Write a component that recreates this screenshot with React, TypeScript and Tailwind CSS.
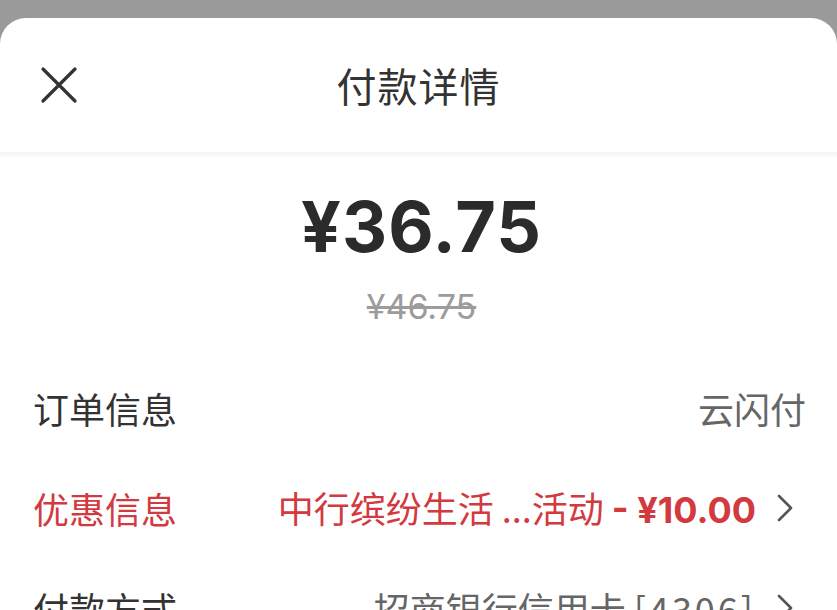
import React from "react";

const cjk = { fontFamily: '"Noto Sans CJK SC", "Noto Sans", sans-serif' };
const num = { fontFamily: 'Inter, "Noto Sans CJK SC", sans-serif' };

function Chevron() {
  return (
    <svg width="18" height="28" viewBox="0 0 18 28" className="shrink-0 mr-[12px]">
      <polyline points="3,2 15,14 3,26" fill="none" stroke="#555" strokeWidth="2.6" strokeLinecap="round" strokeLinejoin="round" />
    </svg>
  );
}

export default function App() {
  return (
    <div className="w-[837px] h-[610px] overflow-hidden bg-[#9a9a9a]" style={cjk}>
      <div className="mt-[18px] h-[592px] bg-white rounded-t-[26px] flex flex-col">
        <div className="h-[134px] shrink-0 grid grid-cols-[1fr_auto_1fr] items-center px-[40px]">
          <svg width="38" height="38" viewBox="0 0 38 38">
            <path d="M3 3 L35 35 M35 3 L3 35" stroke="#333" strokeWidth="3.2" strokeLinecap="round" />
          </svg>
          <div className="text-[40px] leading-none text-[#333] tracking-[1px]">付款详情</div>
          <div />
        </div>
        <div className="h-[6px] shrink-0 bg-gradient-to-b from-[#f3f3f3] to-white" />
        <div className="flex flex-col items-center pt-[34px] pl-[6px]">
          <div className="text-[70px] leading-none font-bold text-[#2b2b2b] tracking-[1px]" style={num}>¥36.75</div>
          <div className="mt-[28px] text-[34px] leading-none text-[#9c9c9c] line-through" style={num}>¥46.75</div>
        </div>
        <div className="flex flex-col pl-[33px] pr-[31px] mt-[34px]">
          <div className="h-[100px] flex items-center justify-between">
            <span className="text-[36px] text-[#333]">订单信息</span>
            <span className="text-[36px] text-[#666]">云闪付</span>
          </div>
          <div className="h-[100px] flex items-center justify-between">
            <span className="text-[36px] text-[#d23a3f]">优惠信息</span>
            <span className="flex items-center gap-[20px]">
              <span className="text-[36px] text-[#d23a3f] whitespace-nowrap">
                中行缤纷生活 ...活动 <span className="font-bold" style={num}>- ¥10.00</span>
              </span>
              <Chevron />
            </span>
          </div>
          <div className="h-[100px] flex items-center justify-between">
            <span className="text-[36px] text-[#333]">付款方式</span>
            <span className="flex items-center gap-[20px]">
              <span className="text-[36px] text-[#666] whitespace-nowrap">
                招商银行信用卡 <span className="tracking-[3px]">[4306]</span>
              </span>
              <Chevron />
            </span>
          </div>
        </div>
      </div>
    </div>
  );
}
